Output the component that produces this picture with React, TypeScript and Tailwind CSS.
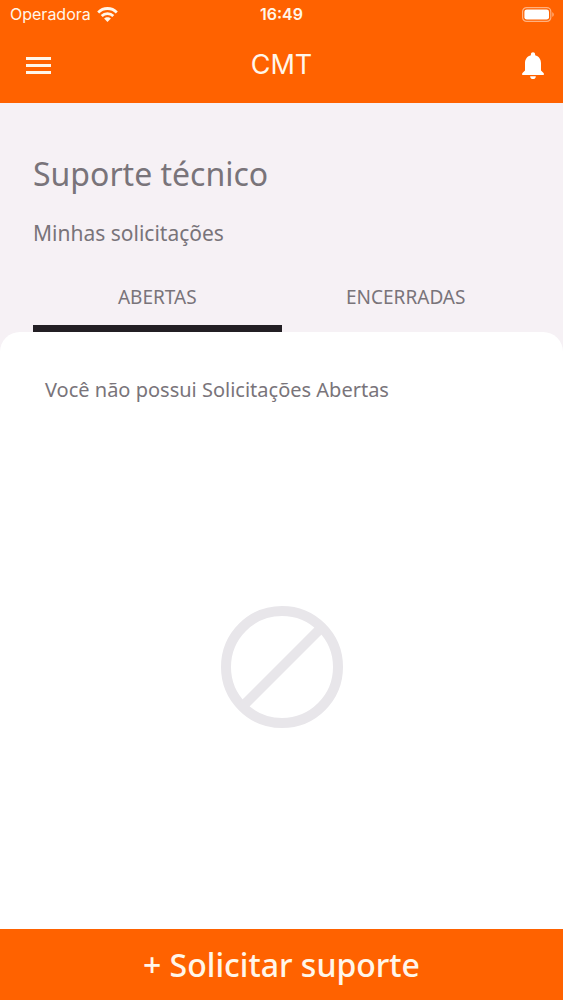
import { useState } from 'react';

type Tab = 'abertas' | 'encerradas';

const TABS: { id: Tab; label: string; empty: string }[] = [
  { id: 'abertas', label: 'ABERTAS', empty: 'Você não possui Solicitações Abertas' },
  { id: 'encerradas', label: 'ENCERRADAS', empty: 'Você não possui Solicitações Encerradas' },
];

// ── Icons ─────────────────────────────────────────────────────────────────────
function WifiIcon() {
  return (
    <svg width="21" height="15" viewBox="0 0 21 15" fill="none" stroke="currentColor" strokeWidth="2.8" aria-hidden="true">
      <path d="M1.200 5.400c5.200-5.200 13.400-5.200 18.600 0" />
      <path d="M4.700 9c3.200-3.200 8.400-3.200 11.600 0" />
      <path d="M10.500 15 7.100 11.600c1.900-1.800 4.900-1.800 6.800 0z" fill="currentColor" stroke="none" />
    </svg>
  );
}

function BatteryIcon() {
  return (
    <svg width="33" height="15" viewBox="0 0 33 15" fill="none" aria-hidden="true">
      <rect x=".6" y=".6" width="28.2" height="13.8" rx="4" stroke="#fff" strokeOpacity=".5" strokeWidth="1.2" />
      <rect x="2.4" y="2.4" width="24.6" height="10.2" rx="2.4" fill="#fff" />
      <path d="M30.300 5.200c1.900.7 1.900 3.900 0 4.600z" fill="#fff" fillOpacity=".5" />
    </svg>
  );
}

function MenuIcon() {
  return (
    <svg width="25" height="18" viewBox="0 0 25 18" fill="currentColor" aria-hidden="true">
      <path d="M0 0h25v3H0zM0 7h25v3H0zM0 14h25v3H0z" />
    </svg>
  );
}

function BellIcon() {
  return (
    <svg width="22" height="28" viewBox="0 0 22 28" fill="#fff" aria-hidden="true">
      <path d="M11 .3c-1.200 0-2.100.9-2.100 2v.9C5.300 4.100 3 7.200 3 11v7.400L.2 21.200V23h21.600v-1.800L19 18.400V11c0-3.800-2.300-6.900-5.900-7.800v-.9c0-1.100-.9-2-2.100-2z" />
      <path d="M8.200 24.200h5.600a2.800 2.800 0 0 1-5.600 0z" />
    </svg>
  );
}

function EmptyIcon() {
  return (
    <svg width="122" height="122" viewBox="0 0 122 122" fill="none" stroke="currentColor" strokeWidth="10" aria-hidden="true">
      <circle cx="61" cy="61" r="56" />
      <path d="M21.500 100.500l79-79" />
    </svg>
  );
}

// ── Header ────────────────────────────────────────────────────────────────────
function Header() {
  return (
    <header className="bg-[#ff6200] font-['Inter',sans-serif] text-[#fff6ea]">
      <div className="grid h-7 grid-cols-3 items-center px-2 text-base">
        <span className="flex items-center gap-1.5 pl-0.5">
          Operadora
          <WifiIcon />
        </span>
        <span className="text-center font-semibold">16:49</span>
        <span className="flex justify-end">
          <BatteryIcon />
        </span>
      </div>
      <div className="grid h-[75px] grid-cols-3 items-center px-[19px]">
        <button type="button" aria-label="Menu" className="justify-self-start pl-[7px]">
          <MenuIcon />
        </button>
        <span className="text-center text-[27px]">CMT</span>
        <button type="button" aria-label="Notificações" className="justify-self-end">
          <BellIcon />
        </button>
      </div>
    </header>
  );
}

// ── Screen ────────────────────────────────────────────────────────────────────
export default function App() {
  const [tab, setTab] = useState<Tab>('abertas');
  const current = TABS.find((t) => t.id === tab)!;

  return (
    <div className="flex min-h-screen flex-col bg-[#f6f1f5] font-['Noto_Sans','Open_Sans',sans-serif] text-[#79747a]">
      <Header />

      <div className="px-[33px] pt-12">
        <h1 className="text-[32px] leading-[46px]">Suporte técnico</h1>
        <h2 className="mt-5 text-[21px] leading-8">Minhas solicitações</h2>
        <div role="tablist" className="mt-3.5 flex">
          {TABS.map((t) => (
            <button
              key={t.id}
              id={`tab-${t.id}`}
              type="button"
              role="tab"
              aria-selected={t.id === tab}
              aria-controls="panel"
              onClick={() => setTab(t.id)}
              className={`h-[69px] flex-1 border-b-[7px] pt-1.5 text-[19px] ${t.id === tab ? 'border-[#231f24]' : 'border-transparent'}`}
            >
              {t.label}
            </button>
          ))}
        </div>
      </div>

      <main
        id="panel"
        role="tabpanel"
        aria-labelledby={`tab-${tab}`}
        className="flex flex-1 flex-col rounded-t-[20px] bg-white"
      >
        <p className="px-[45px] pt-[42px] text-[20px] leading-8">{current.empty}</p>
        <div className="flex flex-1 items-center justify-center pb-0.5 text-[#e8e6ea]">
          <EmptyIcon />
        </div>
      </main>

      <button type="button" className="h-[71px] w-full bg-[#ff6200] text-[32px] font-medium text-[#fff6ea]">
        + Solicitar suporte
      </button>
    </div>
  );
}
